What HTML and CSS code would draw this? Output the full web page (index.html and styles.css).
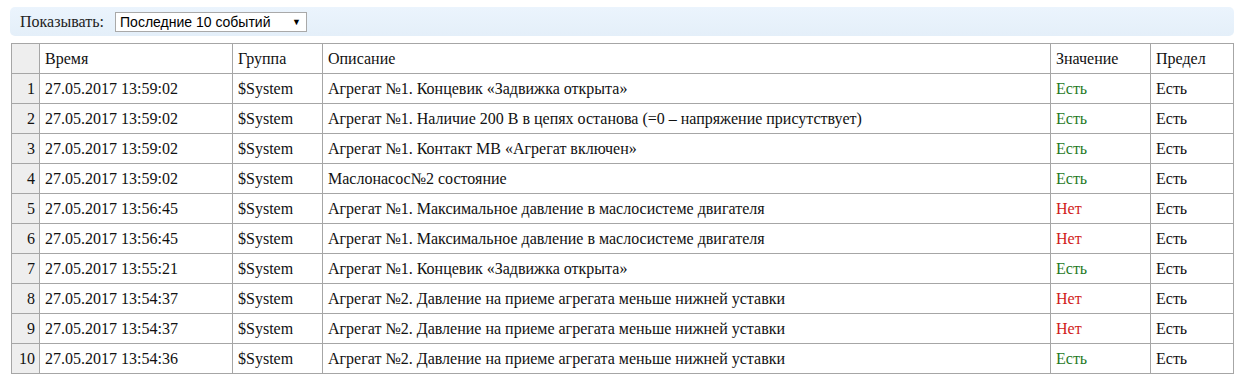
FILE: index.html
```html
<!DOCTYPE html>
<html lang="ru">
<head>
<meta charset="utf-8">
<title>События</title>
<link rel="stylesheet" href="styles.css">
</head>
<body>
<div class="toolbar">
  <span class="label">Показывать:</span>
  <div class="select"><span>Последние 10 событий</span><span class="arrow">▼</span></div>
</div>
<table class="events">
  <colgroup>
    <col class="c-idx"><col class="c-time"><col class="c-group"><col class="c-desc"><col class="c-val"><col class="c-lim">
  </colgroup>
  <thead>
    <tr><th class="idx"></th><th>Время</th><th>Группа</th><th>Описание</th><th>Значение</th><th>Предел</th></tr>
  </thead>
  <tbody>
    <tr><td class="idx">1</td><td>27.05.2017 13:59:02</td><td>$System</td><td>Агрегат №1. Концевик «Задвижка открыта»</td><td class="yes">Есть</td><td>Есть</td></tr>
    <tr><td class="idx">2</td><td>27.05.2017 13:59:02</td><td>$System</td><td>Агрегат №1. Наличие 200 В в цепях останова (=0 – напряжение присутствует)</td><td class="yes">Есть</td><td>Есть</td></tr>
    <tr><td class="idx">3</td><td>27.05.2017 13:59:02</td><td>$System</td><td>Агрегат №1. Контакт МВ «Агрегат включен»</td><td class="yes">Есть</td><td>Есть</td></tr>
    <tr><td class="idx">4</td><td>27.05.2017 13:59:02</td><td>$System</td><td>Маслонасос№2 состояние</td><td class="yes">Есть</td><td>Есть</td></tr>
    <tr><td class="idx">5</td><td>27.05.2017 13:56:45</td><td>$System</td><td>Агрегат №1. Максимальное давление в маслосистеме двигателя</td><td class="no">Нет</td><td>Есть</td></tr>
    <tr><td class="idx">6</td><td>27.05.2017 13:56:45</td><td>$System</td><td>Агрегат №1. Максимальное давление в маслосистеме двигателя</td><td class="no">Нет</td><td>Есть</td></tr>
    <tr><td class="idx">7</td><td>27.05.2017 13:55:21</td><td>$System</td><td>Агрегат №1. Концевик «Задвижка открыта»</td><td class="yes">Есть</td><td>Есть</td></tr>
    <tr><td class="idx">8</td><td>27.05.2017 13:54:37</td><td>$System</td><td>Агрегат №2. Давление на приеме агрегата меньше нижней уставки</td><td class="no">Нет</td><td>Есть</td></tr>
    <tr><td class="idx">9</td><td>27.05.2017 13:54:37</td><td>$System</td><td>Агрегат №2. Давление на приеме агрегата меньше нижней уставки</td><td class="no">Нет</td><td>Есть</td></tr>
    <tr><td class="idx">10</td><td>27.05.2017 13:54:36</td><td>$System</td><td>Агрегат №2. Давление на приеме агрегата меньше нижней уставки</td><td class="yes">Есть</td><td>Есть</td></tr>
  </tbody>
</table>
</body>
</html>
```
FILE: styles.css
```css
html, body {
  margin: 0;
  padding: 0;
  background: #ffffff;
}
body {
  font-family: "Times New Roman", "Liberation Serif", "DejaVu Serif", serif;
  font-size: 16px;
  color: #111;
  padding: 7px 5px 0 10px;
}
.toolbar {
  display: flex;
  align-items: center;
  gap: 11px;
  width: 1224px;
  height: 29px;
  box-sizing: border-box;
  padding: 0 10px;
  border-radius: 5px;
  background: linear-gradient(to bottom, #ebf4fd 0%, #e4eff9 100%);
}
.label {
  font-family: "Times New Roman", "Liberation Serif", serif;
  font-size: 16px;
  color: #222;
}
.select {
  display: flex;
  align-items: center;
  justify-content: space-between;
  box-sizing: border-box;
  width: 192px;
  height: 20px;
  padding: 0 5px 0 4px;
  border: 1px solid #a9a9a9;
  background: #fff;
  font-family: "Liberation Sans", Arial, sans-serif;
  font-size: 14px;
  color: #000;
}
.select .arrow {
  font-size: 9px;
}
.events {
  margin: 7px 0 0 1px;
  border-collapse: collapse;
  table-layout: fixed;
  width: 1222px;
  font-family: "Times New Roman", "Liberation Serif", serif;
}
.c-idx { width: 28px; }
.c-time { width: 193px; }
.c-group { width: 90px; }
.c-desc { width: 728px; }
.c-val { width: 100px; }
.c-lim { width: 83px; }
.events th, .events td {
  border: 1px solid #a6a6a6;
  height: 29px;
  padding: 0 5px;
  text-align: left;
  font-weight: normal;
  white-space: nowrap;
  color: #111;
  font-family: "Times New Roman", "Liberation Serif", serif;
}
.events .idx {
  background: #eeeeee;
  text-align: right;
  padding: 0 4px 0 0;
}
.events td.yes { color: #1f7a1f; }
.events td.no { color: #d11a1a; }
```
